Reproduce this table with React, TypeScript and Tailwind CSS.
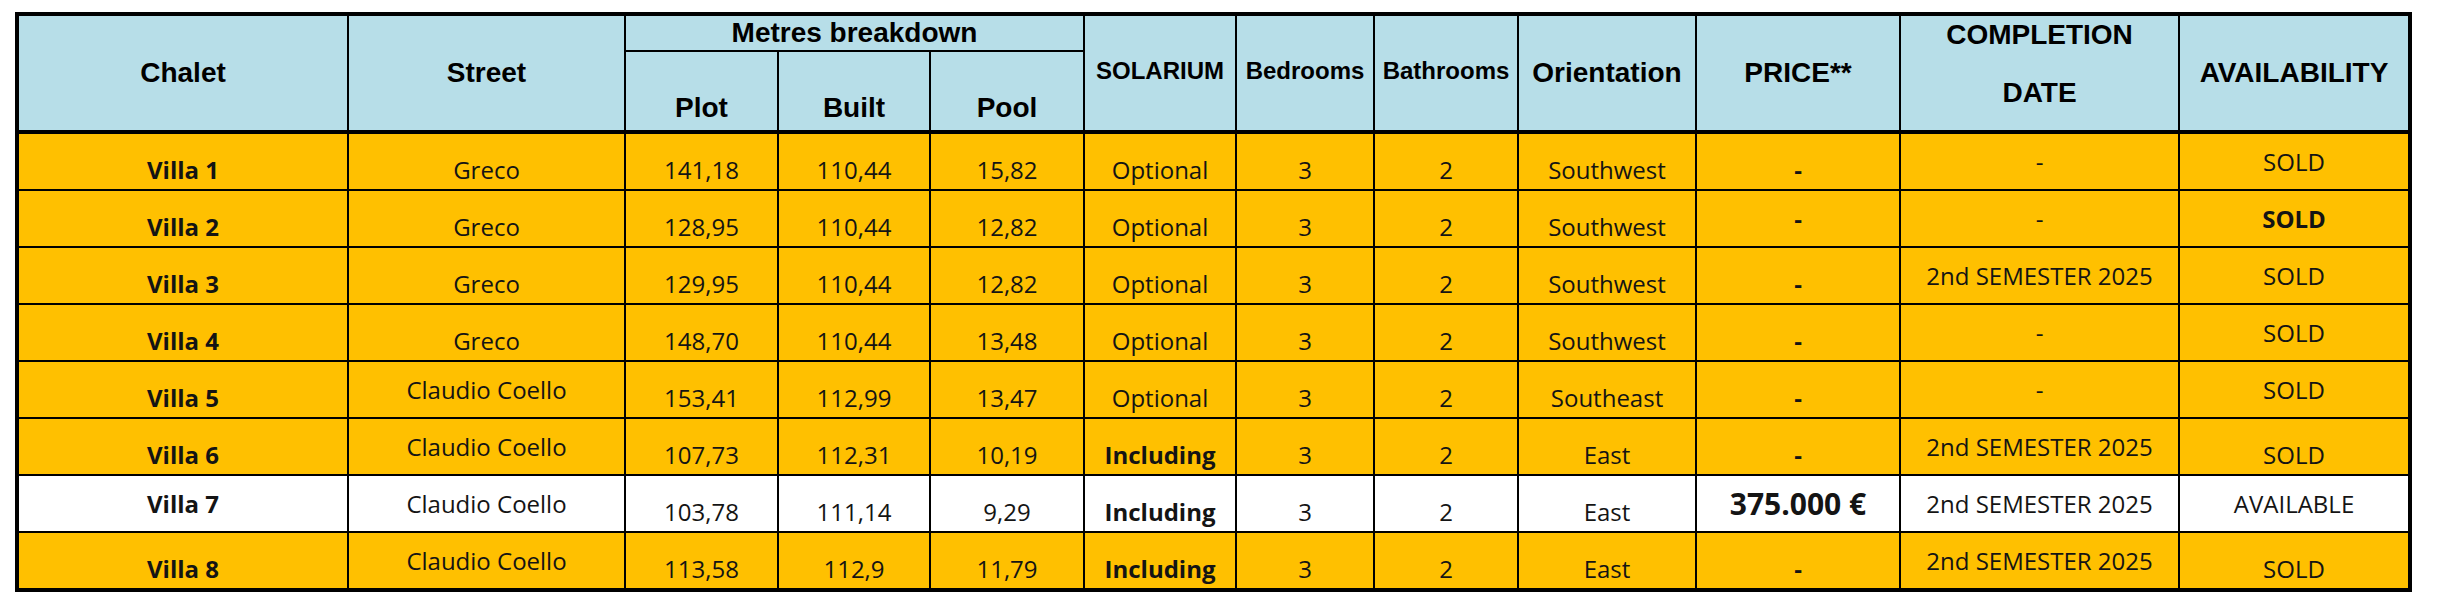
type Align = "b" | "c";

interface CellSpec {
  text: string;
  align?: Align;
  bold?: boolean;
  big?: boolean;
}

interface RowSpec {
  white?: boolean;
  cells: CellSpec[];
}

const cols =
  "grid grid-cols-[328px_275px_151px_150px_152px_150px_136px_142px_176px_202px_277px_228px] gap-[2px]";

const rows: RowSpec[] = [
  {
    cells: [
      { text: "Villa 1", bold: true },
      { text: "Greco" },
      { text: "141,18" },
      { text: "110,44" },
      { text: "15,82" },
      { text: "Optional" },
      { text: "3" },
      { text: "2" },
      { text: "Southwest" },
      { text: "-", bold: true },
      { text: "-", align: "c" },
      { text: "SOLD", align: "c" },
    ],
  },
  {
    cells: [
      { text: "Villa 2", bold: true },
      { text: "Greco" },
      { text: "128,95" },
      { text: "110,44" },
      { text: "12,82" },
      { text: "Optional" },
      { text: "3" },
      { text: "2" },
      { text: "Southwest" },
      { text: "-", bold: true, align: "c" },
      { text: "-", align: "c" },
      { text: "SOLD", align: "c", bold: true },
    ],
  },
  {
    cells: [
      { text: "Villa 3", bold: true },
      { text: "Greco" },
      { text: "129,95" },
      { text: "110,44" },
      { text: "12,82" },
      { text: "Optional" },
      { text: "3" },
      { text: "2" },
      { text: "Southwest" },
      { text: "-", bold: true },
      { text: "2nd SEMESTER 2025", align: "c" },
      { text: "SOLD", align: "c" },
    ],
  },
  {
    cells: [
      { text: "Villa 4", bold: true },
      { text: "Greco" },
      { text: "148,70" },
      { text: "110,44" },
      { text: "13,48" },
      { text: "Optional" },
      { text: "3" },
      { text: "2" },
      { text: "Southwest" },
      { text: "-", bold: true },
      { text: "-", align: "c" },
      { text: "SOLD", align: "c" },
    ],
  },
  {
    cells: [
      { text: "Villa 5", bold: true },
      { text: "Claudio Coello", align: "c" },
      { text: "153,41" },
      { text: "112,99" },
      { text: "13,47" },
      { text: "Optional" },
      { text: "3" },
      { text: "2" },
      { text: "Southeast" },
      { text: "-", bold: true },
      { text: "-", align: "c" },
      { text: "SOLD", align: "c" },
    ],
  },
  {
    cells: [
      { text: "Villa 6", bold: true },
      { text: "Claudio Coello", align: "c" },
      { text: "107,73" },
      { text: "112,31" },
      { text: "10,19" },
      { text: "Including", bold: true },
      { text: "3" },
      { text: "2" },
      { text: "East" },
      { text: "-", bold: true },
      { text: "2nd SEMESTER 2025", align: "c" },
      { text: "SOLD" },
    ],
  },
  {
    white: true,
    cells: [
      { text: "Villa 7", bold: true, align: "c" },
      { text: "Claudio Coello", align: "c" },
      { text: "103,78" },
      { text: "111,14" },
      { text: "9,29" },
      { text: "Including", bold: true },
      { text: "3" },
      { text: "2" },
      { text: "East" },
      { text: "375.000 €", bold: true, big: true, align: "c" },
      { text: "2nd SEMESTER 2025", align: "c" },
      { text: "AVAILABLE", align: "c" },
    ],
  },
  {
    cells: [
      { text: "Villa 8", bold: true },
      { text: "Claudio Coello", align: "c" },
      { text: "113,58" },
      { text: "112,9" },
      { text: "11,79" },
      { text: "Including", bold: true },
      { text: "3" },
      { text: "2" },
      { text: "East" },
      { text: "-", bold: true },
      { text: "2nd SEMESTER 2025", align: "c" },
      { text: "SOLD" },
    ],
  },
];

function HeadCell({
  children,
  className = "",
}: {
  children: React.ReactNode;
  className?: string;
}) {
  return (
    <div
      className={`flex justify-center bg-[#b7dee8] text-center font-bold text-black leading-[28px] ${className}`}
    >
      {children}
    </div>
  );
}

function BodyCell({ cell, white }: { cell: CellSpec; white?: boolean }) {
  const align = cell.align ?? "b";
  return (
    <div
      className={`flex justify-center whitespace-nowrap ${
        align === "b" ? "items-end pb-[5px]" : "items-center"
      } ${white ? "bg-white" : "bg-[#ffc000]"} ${
        cell.bold ? "font-bold" : "font-normal"
      } ${cell.big ? "text-[30px] leading-[34px]" : "text-[24px] leading-[28px]"}`}
    >
      {cell.text}
    </div>
  );
}

export default function App() {
  return (
    <div className="min-h-screen bg-white pt-[12px] pl-[15px]">
      <div className="flex w-fit flex-col gap-[4px] bg-black p-[4px]">
        {/* header */}
        <div
          className={`${cols} grid-rows-[34px_78px] font-['Liberation_Sans',Arial,sans-serif] text-[28px]`}
        >
          <HeadCell className="row-span-2 items-center">Chalet</HeadCell>
          <HeadCell className="row-span-2 items-center">Street</HeadCell>
          <HeadCell className="col-span-3 items-center">Metres breakdown</HeadCell>
          <HeadCell className="row-span-2 items-center pb-[4px] text-[24px]">
            SOLARIUM
          </HeadCell>
          <HeadCell className="row-span-2 items-center pb-[4px] text-[24px]">
            Bedrooms
          </HeadCell>
          <HeadCell className="row-span-2 items-center pb-[4px] text-[24px]">
            Bathrooms
          </HeadCell>
          <HeadCell className="row-span-2 items-center">Orientation</HeadCell>
          <HeadCell className="row-span-2 items-center">PRICE**</HeadCell>
          <HeadCell className="row-span-2 flex-col items-center justify-start gap-[30px] pt-[5px]">
            <span>COMPLETION</span>
            <span>DATE</span>
          </HeadCell>
          <HeadCell className="row-span-2 items-center">AVAILABILITY</HeadCell>
          <HeadCell className="items-end pb-[8px]">Plot</HeadCell>
          <HeadCell className="items-end pb-[8px]">Built</HeadCell>
          <HeadCell className="items-end pb-[8px]">Pool</HeadCell>
        </div>

        {/* body */}
        <div
          className={`${cols} auto-rows-[55px] font-['Open_Sans',sans-serif] text-[#141414]`}
        >
          {rows.map((row, ri) =>
            row.cells.map((cell, ci) => (
              <BodyCell key={`${ri}-${ci}`} cell={cell} white={row.white} />
            ))
          )}
        </div>
      </div>
    </div>
  );
}
